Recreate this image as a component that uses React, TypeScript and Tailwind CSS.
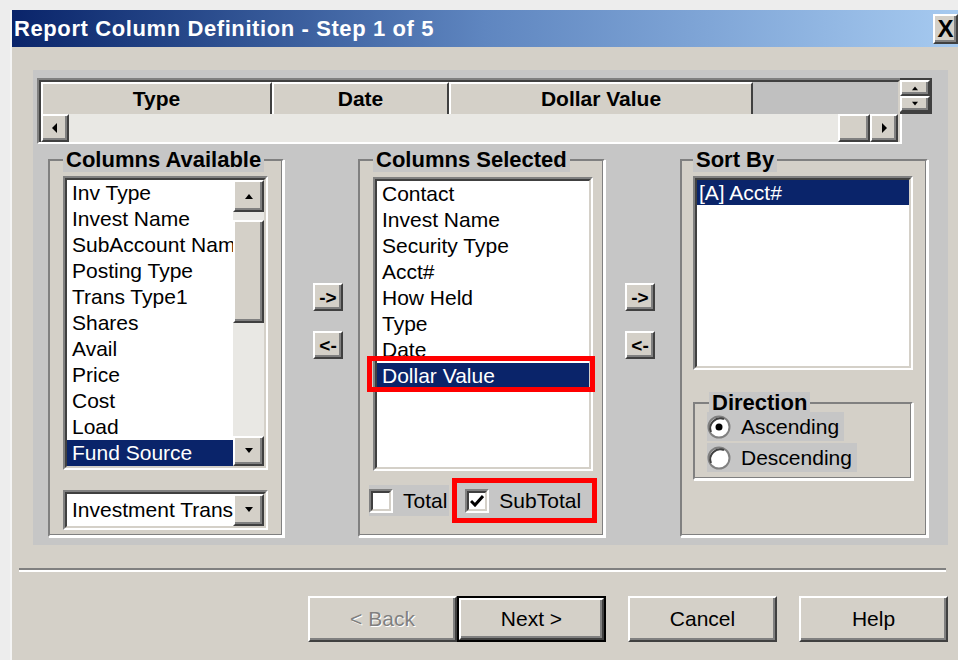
import type { ReactNode } from "react";

const raised =
  "border-2 border-t-white border-l-white border-r-[#404040] border-b-[#404040] shadow-[inset_-2px_-2px_0_#808080] bg-[#d4d0c8]";
const sunkenOuter = "border-2 border-t-[#808080] border-l-[#808080] border-r-white border-b-white";
const sunkenInner = "border-2 border-t-[#404040] border-l-[#404040] border-r-[#d4d0c8] border-b-[#d4d0c8]";

const available = [
  "Inv Type",
  "Invest Name",
  "SubAccount Name",
  "Posting Type",
  "Trans Type1",
  "Shares",
  "Avail",
  "Price",
  "Cost",
  "Load",
  "Fund Source",
];

const selected = ["Contact", "Invest Name", "Security Type", "Acct#", "How Held", "Type", "Date", "Dollar Value"];

function Tri({ dir, size = 8 }: { dir: "up" | "down" | "left" | "right"; size?: number }) {
  const pts = {
    up: "0,8 8,8 4,3",
    down: "0,2 8,2 4,7",
    left: "6,0 6,10 1,5",
    right: "2,0 2,10 7,5",
  }[dir];
  return (
    <svg width={size} height={size + 2} viewBox="0 0 8 10" className="block">
      <polygon points={pts} fill="#000" />
    </svg>
  );
}

function Group({ title, className, children }: { title: string; className: string; children: ReactNode }) {
  return (
    <fieldset
      className={`relative border-2 border-t-[#808080] border-l-[#808080] border-r-white border-b-white shadow-[inset_-1px_-1px_0_#808080,1px_1px_0_#fff] bg-[#d4d0c8] ${className}`}
    >
      <legend className="px-[3px] bg-[#c6c6c6] font-bold text-[22px] leading-[24px] whitespace-nowrap">{title}</legend>
      {children}
    </fieldset>
  );
}

function MoveButton({ label }: { label: string }) {
  return (
    <div className={`${raised} w-[30px] h-[28px] flex items-center justify-center text-[19px] leading-none font-bold`}>
      {label}
    </div>
  );
}

function Check({ checked }: { checked?: boolean }) {
  return (
    <div className={`${sunkenOuter} w-[24px] h-[24px] shrink-0`}>
      <div className={`${sunkenInner} w-full h-full bg-white flex items-center justify-center`}>
        {checked && (
          <svg width="14" height="12" viewBox="0 0 14 12">
            <path d="M1 6 L5 10 L13 1" stroke="#000" strokeWidth="3" fill="none" />
          </svg>
        )}
      </div>
    </div>
  );
}

function Radio({ on }: { on?: boolean }) {
  return (
    <svg width="24" height="24" viewBox="0 0 24 24" className="shrink-0">
      <circle cx="12" cy="12" r="10.5" fill="#fff" stroke="#808080" strokeWidth="2" />
      <path d="M4 17 A10 10 0 0 1 17 4" stroke="#404040" strokeWidth="2" fill="none" />
      {on && <circle cx="12" cy="12" r="3.5" fill="#000" />}
    </svg>
  );
}

function DialogButton({ children, disabled, primary }: { children: ReactNode; disabled?: boolean; primary?: boolean }) {
  return (
    <div className={primary ? "border-2 border-black" : ""}>
      <div
        className={`${raised} ${primary ? "w-[145px] h-[42px]" : "w-[149px] h-[46px]"} flex items-center justify-center text-[21px]`}
      >
        {disabled ? <span className="text-[#808080] [text-shadow:1px_1px_0_#fff]">{children}</span> : children}
      </div>
    </div>
  );
}

export default function App() {
  return (
    <div className="w-[958px] h-[660px] overflow-hidden bg-[#ededed] pl-[10px] pt-[10px] font-['Liberation_Sans',Arial,sans-serif] text-black">
      <div className="h-full border-l-2 border-[#f4f4f4] flex flex-col">
        {/* title bar */}
        <div className="h-[37px] shrink-0 flex items-center justify-between bg-gradient-to-r from-[#0a246a] via-[#5f86c0] to-[#a6caf0]">
          <span className="pl-[2px] text-white font-bold text-[22px] tracking-[0.6px]">Report Column Definition - Step 1 of 5</span>
          <div className={`${raised} w-[25px] h-[30px] flex items-center justify-center font-bold text-[24px] leading-none`}>
            X
          </div>
        </div>

        <div className="flex-1 bg-[#d4d0c8] pl-[21px] pr-[10px] pt-[23px] flex flex-col">
          {/* main panel */}
          <div className="h-[475px] bg-[#c6c6c6] pl-[4px] pt-[8px] flex flex-col">
            {/* column preview grid */}
            <div className="flex items-start">
              <div className="w-[865px] border-2 border-t-[#808080] border-l-[#808080] border-r-white border-b-white">
                <div className="border-2 border-t-[#404040] border-l-[#404040] border-r-[#d4d0c8] border-b-0">
                  <div className="flex h-[32px] bg-[#c0c0c0]">
                    {[
                      ["Type", "w-[231px]"],
                      ["Date", "w-[177px]"],
                      ["Dollar Value", "w-[304px]"],
                    ].map(([t, w]) => (
                      <div
                        key={t}
                        className={`${w} border-t-2 border-l-2 border-white border-r-2 border-r-[#404040] bg-[#d4d0c8] flex items-center justify-center font-bold text-[21px]`}
                      >
                        {t}
                      </div>
                    ))}
                  </div>
                  <div className="flex h-[28px] bg-[#e9e8e4]">
                    <div className={`${raised} w-[28px] flex items-center justify-center`}>
                      <Tri dir="left" />
                    </div>
                    <div className="flex-1" />
                    <div className={`${raised} w-[32px]`} />
                    <div className={`${raised} w-[28px] flex items-center justify-center`}>
                      <Tri dir="right" />
                    </div>
                  </div>
                </div>
              </div>
              <div className="w-[32px] h-[36px] -ml-[2px] border-2 border-[#404040] border-l-0 flex flex-col bg-[#c0c0c0]">
                <div className={`${raised} flex-1 flex items-center justify-center`}>
                  <Tri dir="up" size={6} />
                </div>
                <div className={`${raised} flex-1 flex items-center justify-center`}>
                  <Tri dir="down" size={6} />
                </div>
              </div>
            </div>

            {/* group boxes */}
            <div className="flex items-start mt-[4px] pl-[11px]">
              <Group title="Columns Available" className="w-[236px] h-[389px] pl-[13px]">
                <div className={`${sunkenOuter} w-[205px] h-[294px] mt-[4px]`}>
                  <div className={`${sunkenInner} h-full bg-white flex`}>
                    <div className="flex-1 overflow-hidden text-[21px] leading-[26px] whitespace-nowrap">
                      {available.map((t) => (
                        <div key={t} className={t === "Fund Source" ? "bg-[#0a246a] text-white pl-[5px]" : "pl-[5px]"}>
                          {t}
                        </div>
                      ))}
                    </div>
                    <div className="w-[31px] flex flex-col bg-[#e9e8e4]">
                      <div className={`${raised} h-[32px] flex items-center justify-center`}>
                        <Tri dir="up" />
                      </div>
                      <div className={`${raised} h-[103px] mt-[8px]`} />
                      <div className="flex-1" />
                      <div className={`${raised} h-[30px] flex items-center justify-center`}>
                        <Tri dir="down" />
                      </div>
                    </div>
                  </div>
                </div>
                <div className={`${sunkenOuter} w-[205px] h-[40px] mt-[20px]`}>
                  <div className={`${sunkenInner} h-full bg-white flex`}>
                    <div className="flex-1 overflow-hidden whitespace-nowrap text-[21px] leading-[32px] pl-[5px]">
                      Investment Transactions
                    </div>
                    <div className={`${raised} w-[31px] flex items-center justify-center`}>
                      <Tri dir="down" />
                    </div>
                  </div>
                </div>
              </Group>

              <div className="w-[74px] pl-[29px] pt-[135px] flex flex-col gap-[20px]">
                <MoveButton label="->" />
                <MoveButton label="<-" />
              </div>

              <Group title="Columns Selected" className="w-[247px] h-[389px] pl-[13px]">
                <div className={`${sunkenOuter} w-[220px] h-[294px] mt-[5px]`}>
                  <div className={`${sunkenInner} h-full bg-white text-[21px] leading-[26px] whitespace-nowrap`}>
                    {selected.map((t) =>
                      t === "Dollar Value" ? (
                        <div key={t} className="relative bg-[#0a246a] text-white pl-[5px]">
                          {t}
                          <span className="absolute -left-[10px] -right-[6px] -top-[7px] -bottom-[3px] border-[5px] border-[#ff0000]" />
                        </div>
                      ) : (
                        <div key={t} className="pl-[5px]">
                          {t}
                        </div>
                      ),
                    )}
                  </div>
                </div>
                <div className="flex items-center mt-[7px] -ml-[4px] text-[21px]">
                  <div className="flex items-center gap-[10px] bg-[#c6c6c6] pr-[2px]">
                    <Check />
                    <span>Total</span>
                  </div>
                  <div className="flex items-center gap-[10px] ml-[3px] h-[45px] w-[145px] pl-[8px] border-[5px] border-[#ff0000] bg-[#c6c6c6]">
                    <Check checked />
                    <span>SubTotal</span>
                  </div>
                </div>
              </Group>

              <div className="w-[75px] pl-[20px] pt-[135px] flex flex-col gap-[20px]">
                <MoveButton label="->" />
                <MoveButton label="<-" />
              </div>

              <Group title="Sort By" className="w-[248px] h-[389px] pl-[11px]">
                <div className={`${sunkenOuter} w-[220px] h-[194px] mt-[4px]`}>
                  <div className={`${sunkenInner} h-full bg-white text-[21px] leading-[25px]`}>
                    <div className="bg-[#0a246a] text-white pl-[2px]">[A] Acct#</div>
                  </div>
                </div>
                <fieldset className="mt-[22px] w-[220px] h-[88px] border-2 border-t-[#808080] border-l-[#808080] border-r-white border-b-white shadow-[inset_-1px_-1px_0_#808080,1px_1px_0_#fff] pl-[14px]">
                  <legend className="px-[3px] bg-[#c6c6c6] font-bold text-[22px] leading-[22px]">Direction</legend>
                  <div className="-ml-[2px] -mt-[2px] text-[21px] leading-[29px]">
                    <div className="flex items-center gap-[10px] bg-[#c6c6c6] w-[137px]">
                      <Radio on />
                      <span>Ascending</span>
                    </div>
                    <div className="flex items-center gap-[10px] bg-[#c6c6c6] w-[150px] mt-[2px]">
                      <Radio />
                      <span>Descending</span>
                    </div>
                  </div>
                </fieldset>
              </Group>
            </div>
          </div>

          {/* separator */}
          <div className="mt-[23px] -ml-[14px] mr-[2px] border-t-2 border-[#808080] border-b-2 border-b-white" />

          {/* buttons */}
          <div className="mt-[24px] flex justify-end gap-[22px]">
            <div className="flex">
              <DialogButton disabled>&lt; Back</DialogButton>
              <DialogButton primary>Next &gt;</DialogButton>
            </div>
            <DialogButton>Cancel</DialogButton>
            <DialogButton>Help</DialogButton>
          </div>
        </div>
      </div>
    </div>
  );
}
